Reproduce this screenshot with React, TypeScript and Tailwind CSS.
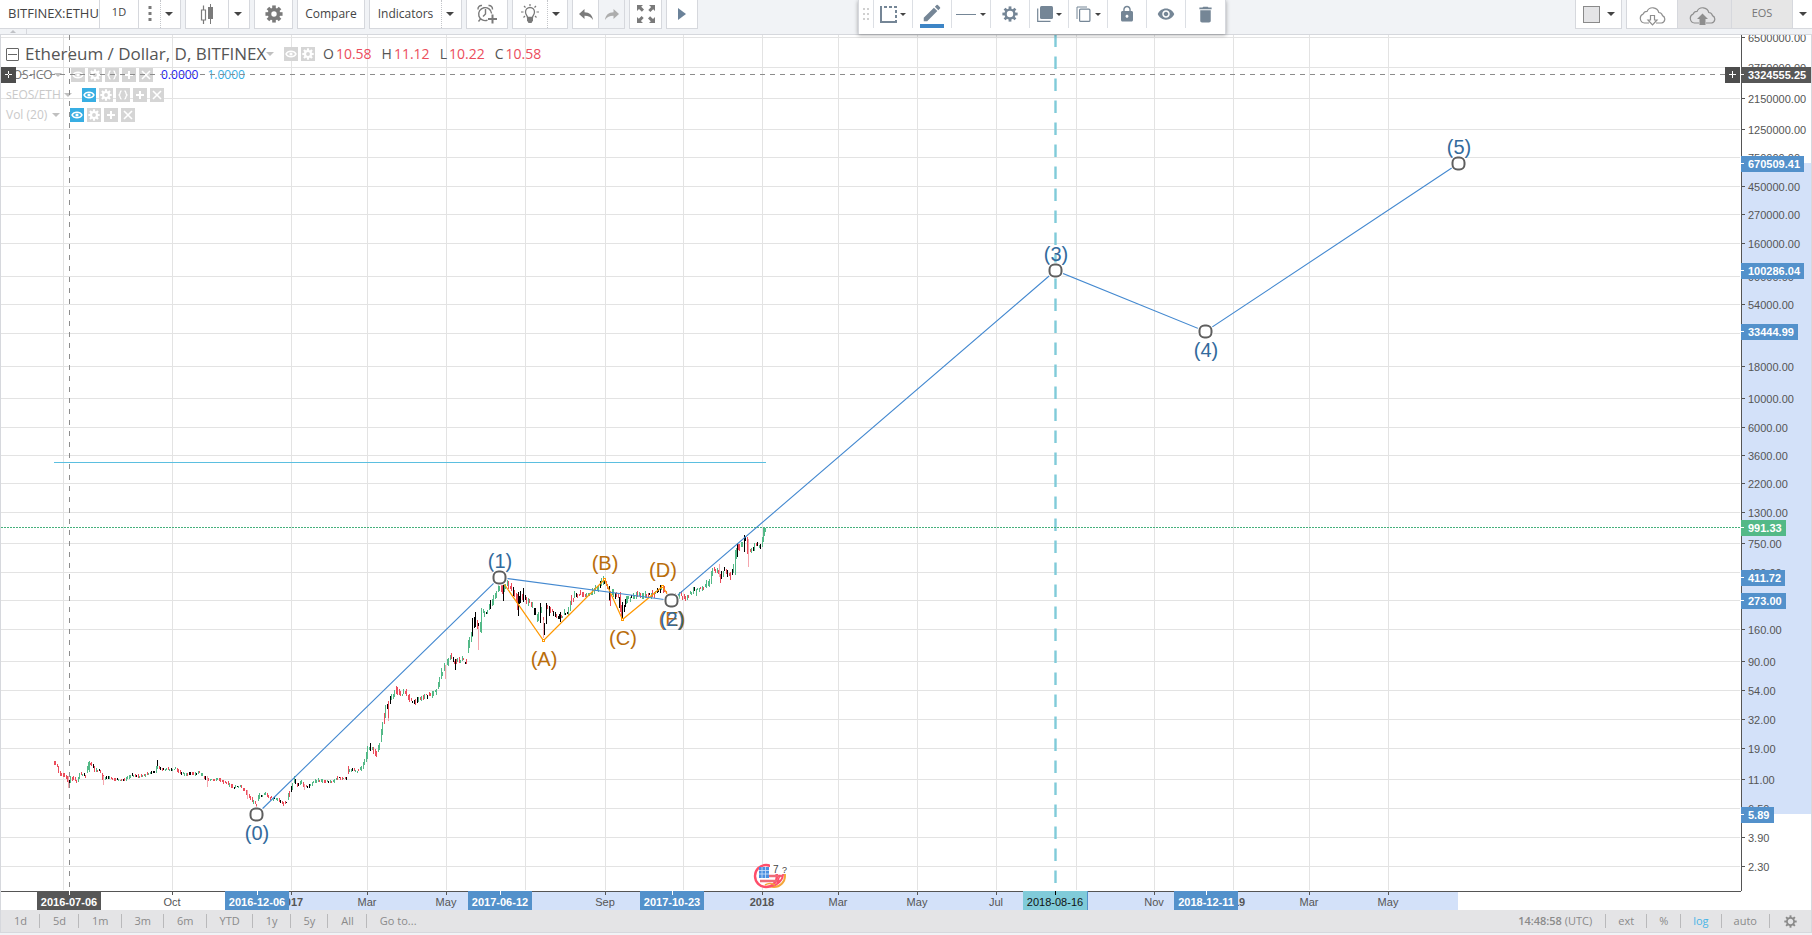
import React from "react";
import { MdEdit, MdLock, MdVisibility, MdDelete } from "react-icons/md";

/* ---------- data ---------- */

const GRID_X = [63, 172, 291, 367, 446, 525, 605, 683, 762, 838, 917, 996, 1076, 1154, 1233, 1309, 1388];

const PRICES: [string, number][] = [
  ["6500000.00", 37], ["3750000.00", 67], ["2150000.00", 98], ["1250000.00", 129], ["750000.00", 157],
  ["450000.00", 186], ["270000.00", 214], ["160000.00", 243], ["90000.00", 276], ["54000.00", 304],
  ["33000.00", 333], ["18000.00", 366], ["10000.00", 398], ["6000.00", 427], ["3600.00", 455],
  ["2200.00", 483], ["1300.00", 512], ["750.00", 543], ["450.00", 572], ["270.00", 600],
  ["160.00", 629], ["90.00", 661], ["54.00", 690], ["32.00", 719], ["19.00", 748],
  ["11.00", 779], ["6.50", 808], ["3.90", 837], ["2.30", 866],
];

const PRICE_TAGS: { t: string; y: number; w: number; c: string }[] = [
  { t: "670509.41", y: 164, w: 63, c: "#5391cb" },
  { t: "100286.04", y: 271, w: 63, c: "#5391cb" },
  { t: "33444.99", y: 332, w: 57, c: "#5391cb" },
  { t: "991.33", y: 528, w: 45, c: "#53b987" },
  { t: "411.72", y: 578, w: 44, c: "#5391cb" },
  { t: "273.00", y: 601, w: 45, c: "#5391cb" },
  { t: "5.89", y: 815, w: 33, c: "#5391cb" },
  { t: "3324555.25", y: 75, w: 70, c: "#575757" },
];

const MONTHS: [string, number, boolean?][] = [
  ["Oct", 172], ["2017", 291, true], ["Mar", 367], ["May", 446], ["Sep", 605], ["2018", 762, true],
  ["Mar", 838], ["May", 917], ["Jul", 996], ["Nov", 1154], ["2019", 1233, true], ["Mar", 1309], ["May", 1388],
];

const DATE_TAGS: { t: string; x: number; c: string }[] = [
  { t: "2016-07-06", x: 69, c: "#575757" },
  { t: "2016-12-06", x: 257, c: "#5391cb" },
  { t: "2017-06-12", x: 500, c: "#5391cb" },
  { t: "2017-10-23", x: 672, c: "#5391cb" },
  { t: "2018-12-11", x: 1206, c: "#5391cb" },
];

const TREND: [number, number][] = [
  [54, 763], [57, 766], [60, 773], [65, 775], [68, 780], [69, 783], [71, 778], [77, 781], [80, 774], [85, 776],
  [89, 763], [92, 765], [95, 770], [100, 771], [103, 780], [107, 777], [115, 780], [125, 779], [133, 775], [140, 777],
  [148, 774], [155, 772], [157, 766], [162, 769], [175, 769], [182, 774], [192, 774], [200, 773], [205, 777], [207, 780],
  [218, 779], [225, 782], [233, 787], [240, 786], [246, 792], [250, 797], [256, 805], [259, 796], [265, 794], [270, 798],
  [277, 799], [283, 803], [286, 803], [289, 795], [294, 780], [297, 785], [301, 782], [305, 787], [310, 785], [317, 780],
  [325, 782], [333, 781], [338, 778], [346, 778], [348, 770], [358, 771], [363, 766], [366, 757], [368, 748], [372, 748],
  [376, 755], [379, 745], [382, 730], [386, 707], [389, 702], [392, 697], [396, 689], [400, 694], [405, 693], [410, 700],
  [415, 703], [420, 697], [430, 694], [437, 690], [441, 675], [445, 667], [450, 657], [455, 662], [460, 660], [466, 662],
  [468, 645], [472, 632], [475, 618], [479, 632], [482, 613], [487, 612], [492, 603], [497, 590], [500, 585], [503, 592],
  [507, 583], [512, 590], [518, 605], [521, 593], [526, 601], [532, 605], [537, 617], [541, 610], [544, 630], [546, 607],
  [552, 610], [557, 618], [562, 615], [567, 612], [572, 600], [575, 594], [585, 595], [590, 593], [598, 588], [603, 580],
  [608, 588], [610, 598], [613, 592], [618, 597], [622, 613], [626, 600], [632, 597], [638, 593], [650, 596], [657, 592],
  [662, 586], [666, 595], [670, 600], [680, 595], [685, 598], [690, 593], [698, 590], [705, 586], [710, 580], [713, 568],
  [718, 570], [720, 577], [725, 570], [730, 575], [734, 567], [737, 546], [740, 548], [743, 543], [746, 537], [748, 550],
  [751, 550], [755, 545], [761, 546], [764, 531], [766, 528],
];

/* x, top, bottom, colour */
const WICKS: [number, number, number, string][] = [
  [68, 776, 788, "#f5a6ae"], [103, 776, 785, "#f5a6ae"], [157, 760, 766, "#000"], [207, 776, 787, "#f5a6ae"],
  [247, 790, 799, "#f5a6ae"], [304, 784, 790, "#f5a6ae"], [89, 761, 772, "#53b987"], [370, 743, 751, "#000"],
  [388, 703, 718, "#eb4d5c"], [388, 718, 721, "#f5a6ae"], [445, 665, 679, "#f5a6ae"], [455, 659, 670, "#000"],
  [472, 618, 636, "#000"], [475, 615, 627, "#000"], [478, 626, 650, "#f5a6ae"], [481, 608, 633, "#53b987"],
  [503, 584, 601, "#000"], [518, 592, 616, "#000"], [517, 594, 610, "#eb4d5c"], [523, 588, 602, "#000"],
  [540, 603, 623, "#000"], [543, 620, 638, "#f5a6ae"], [546, 603, 624, "#000"], [549, 606, 616, "#000"],
  [560, 612, 622, "#000"], [609, 586, 600, "#000"], [620, 592, 612, "#eb4d5c"], [622, 602, 618, "#000"],
  [626, 596, 604, "#53b987"], [735, 550, 575, "#53b987"], [737, 543, 557, "#000"], [744, 535, 552, "#000"],
  [748, 539, 567, "#f5a6ae"], [747, 541, 554, "#eb4d5c"], [719, 564, 577, "#f5a6ae"], [764, 528, 536, "#53b987"],
];

const noise = (n: number) => {
  const s = Math.sin(n * 127.1 + 11.7) * 43758.5453;
  return s - Math.floor(s);
};

function buildCandles() {
  const out: { x: number; y: number; h: number; c: string }[] = [];
  let seg = 0;
  let n = 0;
  for (let x = 54; x <= 765; x += n % 2 === 0 ? 2 : 1) {
    n += 1;
    while (seg < TREND.length - 2 && x > TREND[seg + 1][0]) seg += 1;
    const [x0, y0] = TREND[seg];
    const [x1, y1] = TREND[seg + 1];
    const slope = (y1 - y0) / (x1 - x0);
    const mid = y0 + slope * (x - x0);
    const lively = x > 435 ? 1.4 : x > 360 ? 1.2 : 0.6;
    const h = Math.round(1 + noise(n) * 4 * lively + Math.min(Math.abs(slope) * 1.6, 8));
    const y = Math.round(mid - h / 2 + (noise(n + 500) - 0.5) * 3 * lively);
    const r = noise(n + 900);
    const up = slope < -0.3 ? r > 0.2 : slope > 0.3 ? r > 0.92 : r > 0.55;
    const c = noise(n + 1300) > 0.84 ? "#000" : up ? "#53b987" : "#eb4d5c";
    out.push({ x, y, h, c });
  }
  return out;
}

const CANDLES = buildCandles();

const WAVE: [number, number][] = [[256, 814], [499, 577], [671, 600], [1055, 270], [1205, 331], [1458, 163]];
const CORRECTION: [number, number][] = [[499, 577], [543, 640], [604, 579], [622, 619], [662, 586], [671, 600]];

const WAVE_LABELS: [string, number, number][] = [
  ["(0)", 257, 840], ["(1)", 500, 568], ["(3)", 1056, 261], ["(4)", 1206, 357], ["(5)", 1459, 154],
];
const CORRECTION_LABELS: [string, number, number][] = [
  ["(A)", 544, 666], ["(B)", 605, 570], ["(C)", 623, 645], ["(D)", 663, 577], ["(E)", 672, 626],
];

/* ---------- icons ---------- */

function Gear({ size, ring, r, tooth, className }: { size: number; ring: number; r: number; tooth: number; className?: string }) {
  return (
    <svg width={size} height={size} viewBox="-10 -10 20 20" className={className} aria-hidden="true">
      <circle r={r} fill="none" stroke="currentColor" strokeWidth={ring} />
      {[0, 45, 90, 135, 180, 225, 270, 315].map((a) => (
        <rect key={a} x={-tooth / 2} y={-9.5} width={tooth} height={4} fill="currentColor" transform={`rotate(${a})`} />
      ))}
    </svg>
  );
}

function Caret({ className }: { className?: string }) {
  return (
    <svg width="8" height="4" viewBox="0 0 8 4" className={className} aria-hidden="true">
      <path d="M0 0h8L4 4z" fill="currentColor" />
    </svg>
  );
}

function SmallCaret() {
  return (
    <svg width="6" height="3" viewBox="0 0 6 3" className="text-[#444]" aria-hidden="true">
      <path d="M0 0h6L3 3z" fill="currentColor" />
    </svg>
  );
}

function CandlesIcon() {
  return (
    <svg width="14" height="20" viewBox="0 0 14 20" className="text-[#7a7a7a]" aria-hidden="true">
      <path d="M3.500 1.500v4.500M3.500 16v4M1.500 6h4v10h-4z" fill="none" stroke="currentColor" strokeWidth="1.200" />
      <path d="M8 3h5v12H8zM10 0h1v20h-1z" fill="currentColor" />
    </svg>
  );
}

function AlarmIcon() {
  return (
    <svg width="21" height="20" viewBox="0 0 21 20" className="text-[#7a7a7a]" aria-hidden="true">
      <g fill="none" stroke="currentColor" strokeWidth="1.400">
        <path d="M10.500 16.200A6.500 6.500 0 1 1 14.600 9.500" />
        <path d="M1 5.500C.8 3 2.500 1.200 5 1.500M11.500 1.500c2.500-.3 4.200 1.500 4 4M3.800 14.600 1.500 17.500" />
        <path d="M8.500 5v5L6 12.500" />
      </g>
      <path d="M14.500 10.500h2v3.500H20v2h-3.500v3.500h-2V16H11v-2h3.500z" fill="currentColor" />
    </svg>
  );
}

function BulbIcon() {
  return (
    <svg width="18" height="20" viewBox="0 0 18 20" className="text-[#7a7a7a]" aria-hidden="true">
      <path d="M6.500 13.500C6.500 11.500 4.500 11 4.500 8a4.500 4.500 0 0 1 9 0c0 3-2 3.500-2 5.500z" fill="none" stroke="currentColor" strokeWidth="1.300" />
      <path d="M6 13h6v3.500L10.500 19h-3L6 16.500z" fill="currentColor" />
      <path d="M9 0v2M3 2l1.500 1.500M15 2l-1.500 1.500M0 8h2.500M15.500 8H18M2.500 13.500 4 12M15.500 13.500 14 12" stroke="currentColor" strokeWidth="1.200" />
    </svg>
  );
}

function UndoIcon({ className }: { className: string }) {
  return (
    <svg width="14" height="12" viewBox="0 0 14 12" className={className} aria-hidden="true">
      <path d="M0 5 5.500 0v3.200C10.500 3.200 13.500 6 14 11 12 8 9.500 6.800 5.500 6.800V10z" fill="currentColor" />
    </svg>
  );
}

function ExpandIcon() {
  return (
    <svg width="18" height="18" viewBox="0 0 18 18" className="text-[#7a7a7a]" aria-hidden="true">
      {[0, 90, 180, 270].map((a) => (
        <path key={a} d="M0 0h6L4.200 1.800 7 4.600 4.900 6.700 2 3.900 0 6z" fill="currentColor" transform={`rotate(${a} 9 9)`} />
      ))}
    </svg>
  );
}

function CloudIcon({ up }: { up?: boolean }) {
  return (
    <svg width="27" height="19" viewBox="0 0 27 19" className="text-[#8e8e8e]" aria-hidden="true">
      <path
        d="M10 16H5.500A4.700 4.700 0 0 1 4.200 7 4 4 0 0 1 8 4.400 6.300 6.300 0 0 1 19.800 5.500 4.300 4.300 0 0 1 23.500 8.600 3.900 3.900 0 0 1 22.500 16H17"
        fill="none" stroke="currentColor" strokeWidth="1.200"
      />
      {up ? (
        <path d="M13.500 6.500 19 12h-2.500v6h-6v-6H8z" fill="currentColor" />
      ) : (
        <path d="M11.500 8.500h4v4.500H18L13.500 17.800 9 13h2.500z" fill="#fff" stroke="currentColor" strokeWidth="1.200" />
      )}
    </svg>
  );
}

function FrameIcon() {
  return (
    <svg width="17" height="17" viewBox="0 0 17 17" aria-hidden="true">
      <path d="M1 0v16h16" fill="none" stroke="currentColor" strokeWidth="2" />
      <path d="M4 1h13" fill="none" stroke="currentColor" strokeWidth="2" strokeDasharray="3 2" />
      <path d="M16 4v11" fill="none" stroke="currentColor" strokeWidth="2" strokeDasharray="3 2" />
    </svg>
  );
}

function LayersIcon() {
  return (
    <svg width="16" height="16" viewBox="0 0 16 16" aria-hidden="true">
      <rect x="3" y="0" width="13" height="13" rx="1.500" fill="currentColor" />
      <path d="M.7 2.500V15.300H13.500" fill="none" stroke="currentColor" strokeWidth="1.200" />
    </svg>
  );
}

function CopyIcon() {
  return (
    <svg width="15" height="16" viewBox="0 0 15 16" aria-hidden="true">
      <path d="M1 13V1h10" fill="none" stroke="currentColor" strokeWidth="1" />
      <rect x="3.600" y="3.100" width="10.300" height="12.300" rx="1" fill="none" stroke="currentColor" strokeWidth="1.200" />
    </svg>
  );
}

type Glyph = "eye" | "gear" | "code" | "plus" | "close";

function LegendButton({ kind, active }: { kind: Glyph; active?: boolean }) {
  return (
    <button
      type="button"
      aria-label={kind}
      className={
        "flex size-[14px] shrink-0 items-center justify-center text-white " + (active ? "bg-[#38aee3]" : "bg-[#d5d5d5]")
      }
    >
      {kind === "gear" ? (
        <Gear size={12} ring={3.6} r={5} tooth={3.6} />
      ) : (
        <svg width="14" height="14" viewBox="0 0 14 14" fill="none" stroke="currentColor" aria-hidden="true">
          {kind === "eye" && (
            <>
              <path d="M2 7C4 3.200 10 3.200 12 7 10 10.800 4 10.800 2 7z" strokeWidth="1.500" />
              <circle cx="7" cy="7" r="1.600" fill="currentColor" stroke="none" />
            </>
          )}
          {kind === "code" && <path d="M5.500 3C3.500 3 4.700 6 3 7c1.700 1 .5 4 2.500 4M8.500 3c2 0 .8 3 2.500 4-1.700 1-.5 4-2.500 4" strokeWidth="1.300" />}
          {kind === "plus" && <path d="M7 3v8M3 7h8" strokeWidth="2" />}
          {kind === "close" && <path d="m3 3 8 8M11 3l-8 8" strokeWidth="1.600" />}
        </svg>
      )}
    </button>
  );
}

/* ---------- toolbar ---------- */

function Group({ className, children }: { className: string; children: React.ReactNode }) {
  return <div className={"flex h-[29px] shrink-0 border-x border-b border-[#d6d8dd] bg-white " + className}>{children}</div>;
}

function Tool({ label, className = "flex-1", children }: { label: string; className?: string; children: React.ReactNode }) {
  return (
    <button type="button" aria-label={label} className={"flex items-center justify-center " + className}>
      {children}
    </button>
  );
}

const DOTTED = "w-5 border-l border-dotted border-[#c4c6ca] pr-[3px]";

function TopBar() {
  return (
    <header className="relative flex h-[35px] shrink-0 items-start gap-1 border-b border-[#d6d8dd] bg-[#f1f3f6] text-xs text-[#444]">
      <Group className="w-[181px] border-l-0">
        <input
          aria-label="Symbol"
          defaultValue="BITFINEX:ETHU"
          className="w-[99px] pl-2 text-[13px] text-[#444] outline-none"
        />
        <Tool label="Interval 1D" className="w-10 border-x border-[#d6d8dd] pb-1 text-[11px] font-medium">1D</Tool>
        <Tool label="More intervals">
          <svg width="4" height="16" viewBox="0 0 4 16" className="text-[#7a7a7a]" aria-hidden="true">
            <path d="M0.500 0h3v3h-3zM0.500 6h3v3h-3zM0.500 12h3v3h-3z" fill="currentColor" />
          </svg>
        </Tool>
        <Tool label="Interval menu" className={DOTTED}><Caret /></Tool>
      </Group>
      <Group className="w-[65px]">
        <Tool label="Bar style"><CandlesIcon /></Tool>
        <Tool label="Bar style menu" className="w-[21px] border-l border-[#d6d8dd] pr-[3px]"><Caret /></Tool>
      </Group>
      <Group className="w-[39px]">
        <Tool label="Properties"><Gear size={18} ring={4} r={5} tooth={4} className="text-[#7a7a7a]" /></Tool>
      </Group>
      <Group className="w-[68px]"><Tool label="Compare">Compare</Tool></Group>
      <Group className="w-[93px]">
        <Tool label="Indicators">Indicators</Tool>
        <Tool label="Indicators menu" className={DOTTED}><Caret /></Tool>
      </Group>
      <Group className="w-[42px]"><Tool label="Alert"><AlarmIcon /></Tool></Group>
      <Group className="w-[56px]">
        <Tool label="Ideas"><BulbIcon /></Tool>
        <Tool label="Ideas menu" className={DOTTED}><Caret /></Tool>
      </Group>
      <Group className="w-[53px]">
        <Tool label="Undo" className="flex-1 pt-px"><UndoIcon className="text-[#7a7a7a]" /></Tool>
        <Tool label="Redo" className="w-[26px] border-l border-[#d6d8dd] bg-[#f1f3f6] pt-px"><UndoIcon className="-scale-x-100 text-[#adadad]" /></Tool>
      </Group>
      <Group className="w-[33px]"><Tool label="Full screen"><ExpandIcon /></Tool></Group>
      <Group className="w-8">
        <Tool label="Replay">
          <svg width="8" height="12" viewBox="0 0 8 12" className="text-[#6b8299]" aria-hidden="true"><path d="M0 0l8 6-8 6z" fill="currentColor" /></svg>
        </Tool>
      </Group>

      <Group className="ml-auto w-[47px]">
        <Tool label="Layout" className="flex-1 pl-1"><span className="size-[17px] border border-[#8a8a8a] bg-[#e4e4e6]" /></Tool>
        <Tool label="Layout menu" className="w-[18px] pr-[2px]"><Caret /></Tool>
      </Group>
      <Group className="w-[186px] border-r-0">
        <Tool label="Load" className="w-[50px] pt-1"><CloudIcon /></Tool>
        <Tool label="Save" className="w-[55px] border-x border-[#d6d8dd] bg-[#e4e4e6] pr-1 pt-1"><CloudIcon up /></Tool>
        <Tool label="EOS" className="flex-1 border-r border-[#d6d8dd] bg-[#e6e6e6] pb-px text-[11px] text-[#777]">EOS</Tool>
        <Tool label="Save menu" className="w-[19px]"><Caret /></Tool>
      </Group>

      <div className="absolute bottom-0 left-0 flex h-[5px] w-[27px] items-center justify-center border-r border-[#d6d8dd]">
        <svg width="6" height="3" viewBox="0 0 6 3" className="text-[#c0c2c6]" aria-hidden="true"><path d="M0 3h6L3 0z" fill="currentColor" /></svg>
      </div>

      <div className="absolute left-[858px] top-0 z-20 flex h-[34px] divide-x divide-[#dcdfe4] border-x border-[#d6d8dd] bg-white pb-[6px] text-[#758696] shadow-[0_1px_4px_rgba(0,0,0,0.35)]">
        <div className="flex w-[15px] items-center justify-center">
          <svg width="6" height="12" viewBox="0 0 6 12" className="text-[#d0d0d0]" aria-hidden="true">
            <path d="M0 0h2v2H0zM4 0h2v2H4zM0 5h2v2H0zM4 5h2v2H4zM0 10h2v2H0zM4 10h2v2H4z" fill="currentColor" />
          </svg>
        </div>
        <Tool label="Template" className="w-[39px] gap-[3px]"><FrameIcon /><SmallCaret /></Tool>
        <Tool label="Line colour" className="w-[39px] flex-col pt-[2px]">
          <MdEdit size={22} />
          <span className="h-1 w-6 bg-[#3d85c6]" />
        </Tool>
        <Tool label="Line width" className="w-[39px] gap-1"><span className="h-px w-5 bg-[#758696]" /><SmallCaret /></Tool>
        <Tool label="Settings" className="w-[39px]"><Gear size={16} ring={3} r={5.5} tooth={3.5} /></Tool>
        <Tool label="Visual order" className="w-[39px] gap-[3px]"><LayersIcon /><SmallCaret /></Tool>
        <Tool label="Clone" className="w-[39px] gap-1"><CopyIcon /><SmallCaret /></Tool>
        <Tool label="Lock" className="w-[39px]"><MdLock size={18} /></Tool>
        <Tool label="Hide" className="w-[39px]"><MdVisibility size={18} /></Tool>
        <Tool label="Remove" className="w-[39px]"><MdDelete size={21} /></Tool>
      </div>
    </header>
  );
}

/* ---------- chart ---------- */

const points = (p: [number, number][]) => p.map(([x, y]) => `${x + 0.5},${y + 0.5}`).join(" ");

function Plot() {
  return (
    <svg className="absolute inset-0 size-full font-['Liberation_Sans',Arial,sans-serif]" role="img" aria-label="Price chart">
      <g transform="translate(-1 -35)">
        <g fill="#e3e3e3">
          {GRID_X.map((x) => <rect key={x} x={x} y="35" width="1" height="855" />)}
          {PRICES.map(([t, y]) => <rect key={t} x="0" y={y} width="1740" height="1" />)}
        </g>
        <line x1="1055.500" x2="1055.500" y1="34.500" y2="890" stroke="#80cbd9" strokeWidth="2.400" strokeDasharray="12.500 9.500" />
        <line x1="54" x2="766" y1="462.500" y2="462.500" stroke="#5bbfe0" strokeWidth="1" />
        <line x1="1" x2="1740" y1="527.500" y2="527.500" stroke="#45b07c" strokeWidth="1" strokeDasharray="2 1" />
        <g shapeRendering="crispEdges">
          {CANDLES.map((k, i) => <rect key={i} x={k.x} y={k.y} width="1" height={k.h} fill={k.c} />)}
          {WICKS.map(([x, a, b, c], i) => <rect key={i} x={x} y={a} width="1" height={b - a} fill={c} />)}
        </g>
        <polyline points={points(CORRECTION)} fill="none" stroke="#ff9800" strokeWidth="1.200" />
        {CORRECTION.slice(1, 5).map(([x, y]) => (
          <rect key={x} x={x - 0.5} y={y - 0.5} width="2" height="2" fill="#fff" stroke="#ff9800" />
        ))}
        <polyline points={points(WAVE)} fill="none" stroke="#4489d0" strokeWidth="1.100" />
        <g textAnchor="middle" fontSize="20">
          {CORRECTION_LABELS.map(([t, x, y]) => <text key={t} x={x} y={y} fill="#b96d0b">{t}</text>)}
          {WAVE_LABELS.map(([t, x, y]) => <text key={t} x={x} y={y} fill="#336a9c">{t}</text>)}
          <text x="672" y="626" fill="#336a9c">(2)</text>
        </g>
        {WAVE.map(([x, y]) => (
          <g key={x}>
            <rect x={x - 7.5} y={y - 7.5} width="16" height="16" rx="7" fill="#fff" />
            <rect x={x - 5.5} y={y - 5.5} width="12" height="12" rx="5" fill="#fff" stroke="#5e5e5e" strokeWidth="2" />
          </g>
        ))}
        <g>
          <circle cx="774" cy="876" r="11" fill="#fff" stroke="#f4a63a" strokeWidth="2" />
          <circle cx="766" cy="876" r="11" fill="#fff" stroke="#ff4e6a" strokeWidth="2.400" />
          <path d="M769 876h13M760 881h20" stroke="#ef6a78" strokeWidth="2.500" />
          <path d="M783 872c1 8-6 14-13 14" stroke="#ff4e6a" strokeWidth="1.800" fill="none" />
          <path d="M765 885q5-3 10 0" stroke="#f4a63a" strokeWidth="1.500" fill="none" />
          <path d="M780 875l-3 8" stroke="#ff4e6a" strokeWidth="1.500" />
          <rect x="770" y="863" width="20" height="11" fill="#fff" />
          <rect x="759" y="867" width="10" height="11" fill="#4a8fe0" />
          <path d="M762 867v11M765.500 867v11M759 870.500h10M759 874h10" stroke="#cfe2fa" strokeWidth=".8" />
          <text x="773" y="873" fontSize="10" fill="#444">7</text>
          <text x="782" y="873" fontSize="9" fill="#444">?</text>
        </g>
      </g>
    </svg>
  );
}

function Crosshair() {
  return (
    <svg className="pointer-events-none absolute inset-0 z-10 size-full" aria-hidden="true">
      <g transform="translate(-1 -35)">
        <line x1="69.500" x2="69.500" y1="35" y2="890" stroke="#8c8c8c" strokeDasharray="5 6" />
        <line x1="0" x2="1725" y1="74.500" y2="74.500" stroke="#8c8c8c" strokeDasharray="5 5" />
        <rect x="1" y="67" width="15" height="16" fill="#4d4d4d" />
        <path d="M8.500 71v7M5 74.500h7" stroke="#fff" strokeDasharray="3 1" />
        <rect x="1725" y="67" width="15" height="16" fill="#4d4d4d" />
        <path d="M1732.500 71v7M1729 74.500h7" stroke="#fff" />
      </g>
    </svg>
  );
}

const QUOTES: [string, string][] = [["O", "10.58"], ["H", "11.12"], ["L", "10.22"], ["C", "10.58"]];

function Legend() {
  return (
    <div className="absolute left-[5px] top-2 flex flex-col whitespace-nowrap text-xs text-[#c9c9c9]">
      <div className="flex h-[22px] items-center">
        <button type="button" aria-label="Collapse" className="flex size-[13px] items-center justify-center rounded-[1px] border border-[#666]">
          <span className="h-px w-[9px] bg-[#666]" />
        </button>
        <span className="ml-[6px] w-[241px] text-[17px] text-[#555]">Ethereum / Dollar, D, BITFINEX</span>
        <Caret className="text-[#c0c0c0]" />
        <span className="ml-[10px] flex gap-[3px]"><LegendButton kind="eye" /><LegendButton kind="gear" /></span>
        <dl className="ml-2 flex gap-[10px] text-sm">
          {QUOTES.map(([k, v]) => (
            <div key={k} className="flex gap-[2px]">
              <dt className="text-[#555]">{k}</dt>
              <dd className="text-[#eb4d5c]">{v}</dd>
            </div>
          ))}
        </dl>
      </div>
      <div className="flex h-5 items-center text-[#777]">
        <span className="w-[46px]">EOS-ICO</span>
        <Caret className="ml-[2px] text-[#c0c0c0]" />
        <span className="ml-[9px] flex gap-[3px]">
          <LegendButton kind="eye" /><LegendButton kind="gear" /><LegendButton kind="code" /><LegendButton kind="plus" /><LegendButton kind="close" />
        </span>
        <span className="ml-2 text-[#2222f0]">0.0000</span>
        <span className="ml-[9px] text-[#38aee3]">1.0000</span>
      </div>
      <div className="flex h-5 items-center">
        <span className="w-[54px]">sEOS/ETH</span>
        <Caret className="ml-1 text-[#c0c0c0]" />
        <span className="ml-[10px] flex gap-[3px]">
          <LegendButton kind="eye" active /><LegendButton kind="gear" /><LegendButton kind="code" /><LegendButton kind="plus" /><LegendButton kind="close" />
        </span>
      </div>
      <div className="flex h-5 items-center">
        <span className="w-[43px]">Vol (20)</span>
        <Caret className="ml-[3px] text-[#c0c0c0]" />
        <span className="ml-[10px] flex gap-[3px]">
          <LegendButton kind="eye" active /><LegendButton kind="gear" /><LegendButton kind="plus" /><LegendButton kind="close" />
        </span>
      </div>
    </div>
  );
}

function PriceAxis() {
  return (
    <svg className="block size-full font-['Liberation_Sans',Arial,sans-serif]" fontSize="11" role="img" aria-label="Price axis">
      <g transform="translate(-1741 -35)">
        <rect x="1742" y="163" width="70" height="651" fill="#d3e1f9" />
        <rect x="1741" y="35" width="1" height="857" fill="#555" />
        {PRICES.map(([t, y]) => (
          <g key={t}>
            <rect x="1742" y={y} width="3" height="1" fill="#555" />
            <text x="1748" y={y + 5} fill="#555">{t}</text>
          </g>
        ))}
        {PRICE_TAGS.map((p) => (
          <g key={p.t}>
            <rect x="1741" y={p.y - 8} width={p.w} height="16" fill={p.c} />
            <rect x="1741" y={p.y - 1} width="3" height="1" fill="#fff" />
            <text x="1748" y={p.y + 4} fill="#fff" fontWeight="bold">{p.t}</text>
          </g>
        ))}
      </g>
    </svg>
  );
}

function TimeAxis() {
  return (
    <svg className="block size-full font-['Liberation_Sans',Arial,sans-serif]" fontSize="11" textAnchor="middle" role="img" aria-label="Time axis">
      <g transform="translate(-1 -891)">
        <rect x="257" y="892" width="1201" height="18" fill="#d3e1f9" />
        <rect x="0" y="891" width="1741" height="1" fill="#555" />
        {MONTHS.map(([t, x, bold]) => (
          <g key={x}>
            <rect x={x} y="892" width="1" height="3" fill="#555" />
            <text x={x} y="906" fill="#555" fontWeight={bold ? "bold" : "normal"}>{t}</text>
          </g>
        ))}
        {DATE_TAGS.map((d) => (
          <g key={d.t}>
            <rect x={d.x - 32} y="891" width="64" height="19" fill={d.c} />
            <rect x={d.x} y="891" width="1" height="4" fill="#fff" />
            <text x={d.x} y="906" fill="#fff" fontWeight="bold">{d.t}</text>
          </g>
        ))}
        <rect x="1024" y="891" width="64" height="19" fill="#5391cb" />
        <rect x="1023" y="891" width="64" height="19" fill="#80cbd9" />
        <rect x="1055" y="891" width="1" height="4" fill="#000" />
        <text x="1055" y="906" fill="#111">2018-08-16</text>
      </g>
    </svg>
  );
}

/* ---------- footer ---------- */

const RANGES = ["1d", "5d", "1m", "3m", "6m", "YTD", "1y", "5y", "All", "Go to..."];

function Divider() {
  return <span className="h-[14px] w-px bg-[#b9b9bb]" />;
}

function BottomBar() {
  return (
    <footer className="flex h-[23px] shrink-0 items-center border-x border-b border-[#d6d8dd] bg-[#e4e4e6] text-[11px] font-medium text-[#8a8a8a]">
      {RANGES.map((r, i) => (
        <React.Fragment key={r}>
          {i > 0 && <Divider />}
          <button type="button" className="pl-[13px] pr-3">{r}</button>
        </React.Fragment>
      ))}
      <span className="ml-auto px-[13px]"><b className="font-semibold">14:48:58</b> (UTC)</span>
      <Divider />
      <button type="button" className="px-3">ext</button>
      <Divider />
      <button type="button" className="px-3">%</button>
      <Divider />
      <button type="button" className="px-3 text-[#4bb5e6]">log</button>
      <Divider />
      <button type="button" className="px-3">auto</button>
      <Divider />
      <button type="button" aria-label="Scale settings" className="px-[14px]"><Gear size={13} ring={2.6} r={5.5} tooth={3} /></button>
    </footer>
  );
}

export default function App() {
  return (
    <div className="flex h-screen flex-col overflow-hidden bg-[#f1f3f6] pb-[2px] font-['Open_Sans','Noto_Sans',sans-serif]">
      <TopBar />
      <main className="grid min-h-0 flex-1 grid-cols-[minmax(0,1fr)_70px] grid-rows-[minmax(0,1fr)_19px] border-x border-[#d6d8dd] bg-white">
        <section className="relative overflow-hidden">
          <Plot />
          <Legend />
          <Crosshair />
        </section>
        <PriceAxis />
        <TimeAxis />
        <div className="bg-white" />
      </main>
      <BottomBar />
    </div>
  );
}
